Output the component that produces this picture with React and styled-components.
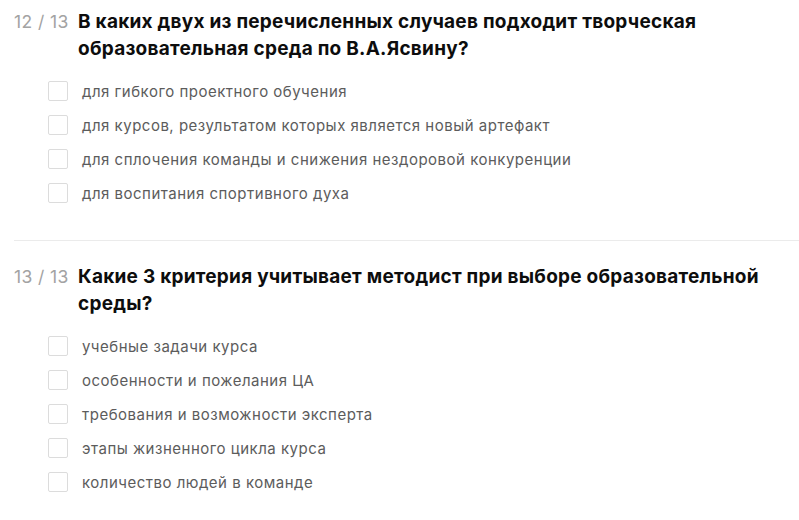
import React from 'react';
import styled, { createGlobalStyle } from 'styled-components';

const GlobalStyle = createGlobalStyle`
	html, body {
		margin: 0;
		background: #fff;
	}
	body {
		font-family: Inter, 'Noto Sans', sans-serif;
	}
`;

const questions = [
	{
		num: 12,
		title: 'В каких двух из перечисленных случаев подходит творческая образовательная среда по В.А.Ясвину?',
		options: [
			'для гибкого проектного обучения',
			'для курсов, результатом которых является новый артефакт',
			'для сплочения команды и снижения нездоровой конкуренции',
			'для воспитания спортивного духа'
		]
	},
	{
		num: 13,
		title: 'Какие 3 критерия учитывает методист при выборе образовательной среды?',
		options: [
			'учебные задачи курса',
			'особенности и пожелания ЦА',
			'требования и возможности эксперта',
			'этапы жизненного цикла курса',
			'количество людей в команде'
		]
	}
];

const Page = styled.div`
	padding-left: 14px;
	width: 785px;
`;

const Question = styled.section`
	padding: 22px 0 30px;
	border-top: 1px solid #ebebeb;

	&:first-child {
		padding-top: 8px;
		border-top: none;
	}
`;

const Header = styled.div`
	display: flex;
	align-items: baseline;
`;

const Number = styled.span`
	flex: 0 0 64px;
	font-size: 17.5px;
	letter-spacing: 0.4px;
	color: #a3a3a3;
	line-height: 27px;
	white-space: nowrap;
`;

const Title = styled.h2`
	margin: 0;
	font-size: 19px;
	font-weight: 700;
	letter-spacing: 0.25px;
	line-height: 27px;
	color: #0d0d0d;
	max-width: 700px;
`;

const Options = styled.ul`
	list-style: none;
	margin: 12px 0 0;
	padding: 0 0 0 34px;
`;

const Option = styled.li`
	display: flex;
	align-items: center;
	height: 34px;
	gap: 14px;
	font-size: 15px;
	letter-spacing: 0.5px;
	color: #5c5c5c;
	cursor: pointer;
`;

const Box = styled.span`
	width: 18px;
	height: 18px;
	border: 1px solid #dcdcdc;
	border-radius: 2px;
	flex: none;
`;

export default function App() {
	return (
		<Page>
			<GlobalStyle />
			{questions.map(q => (
				<Question key={q.num}>
					<Header>
						<Number>{q.num} / 13</Number>
						<Title>{q.title}</Title>
					</Header>
					<Options>
						{q.options.map(opt => (
							<Option key={opt}>
								<Box />
								{opt}
							</Option>
						))}
					</Options>
				</Question>
			))}
		</Page>
	);
}
